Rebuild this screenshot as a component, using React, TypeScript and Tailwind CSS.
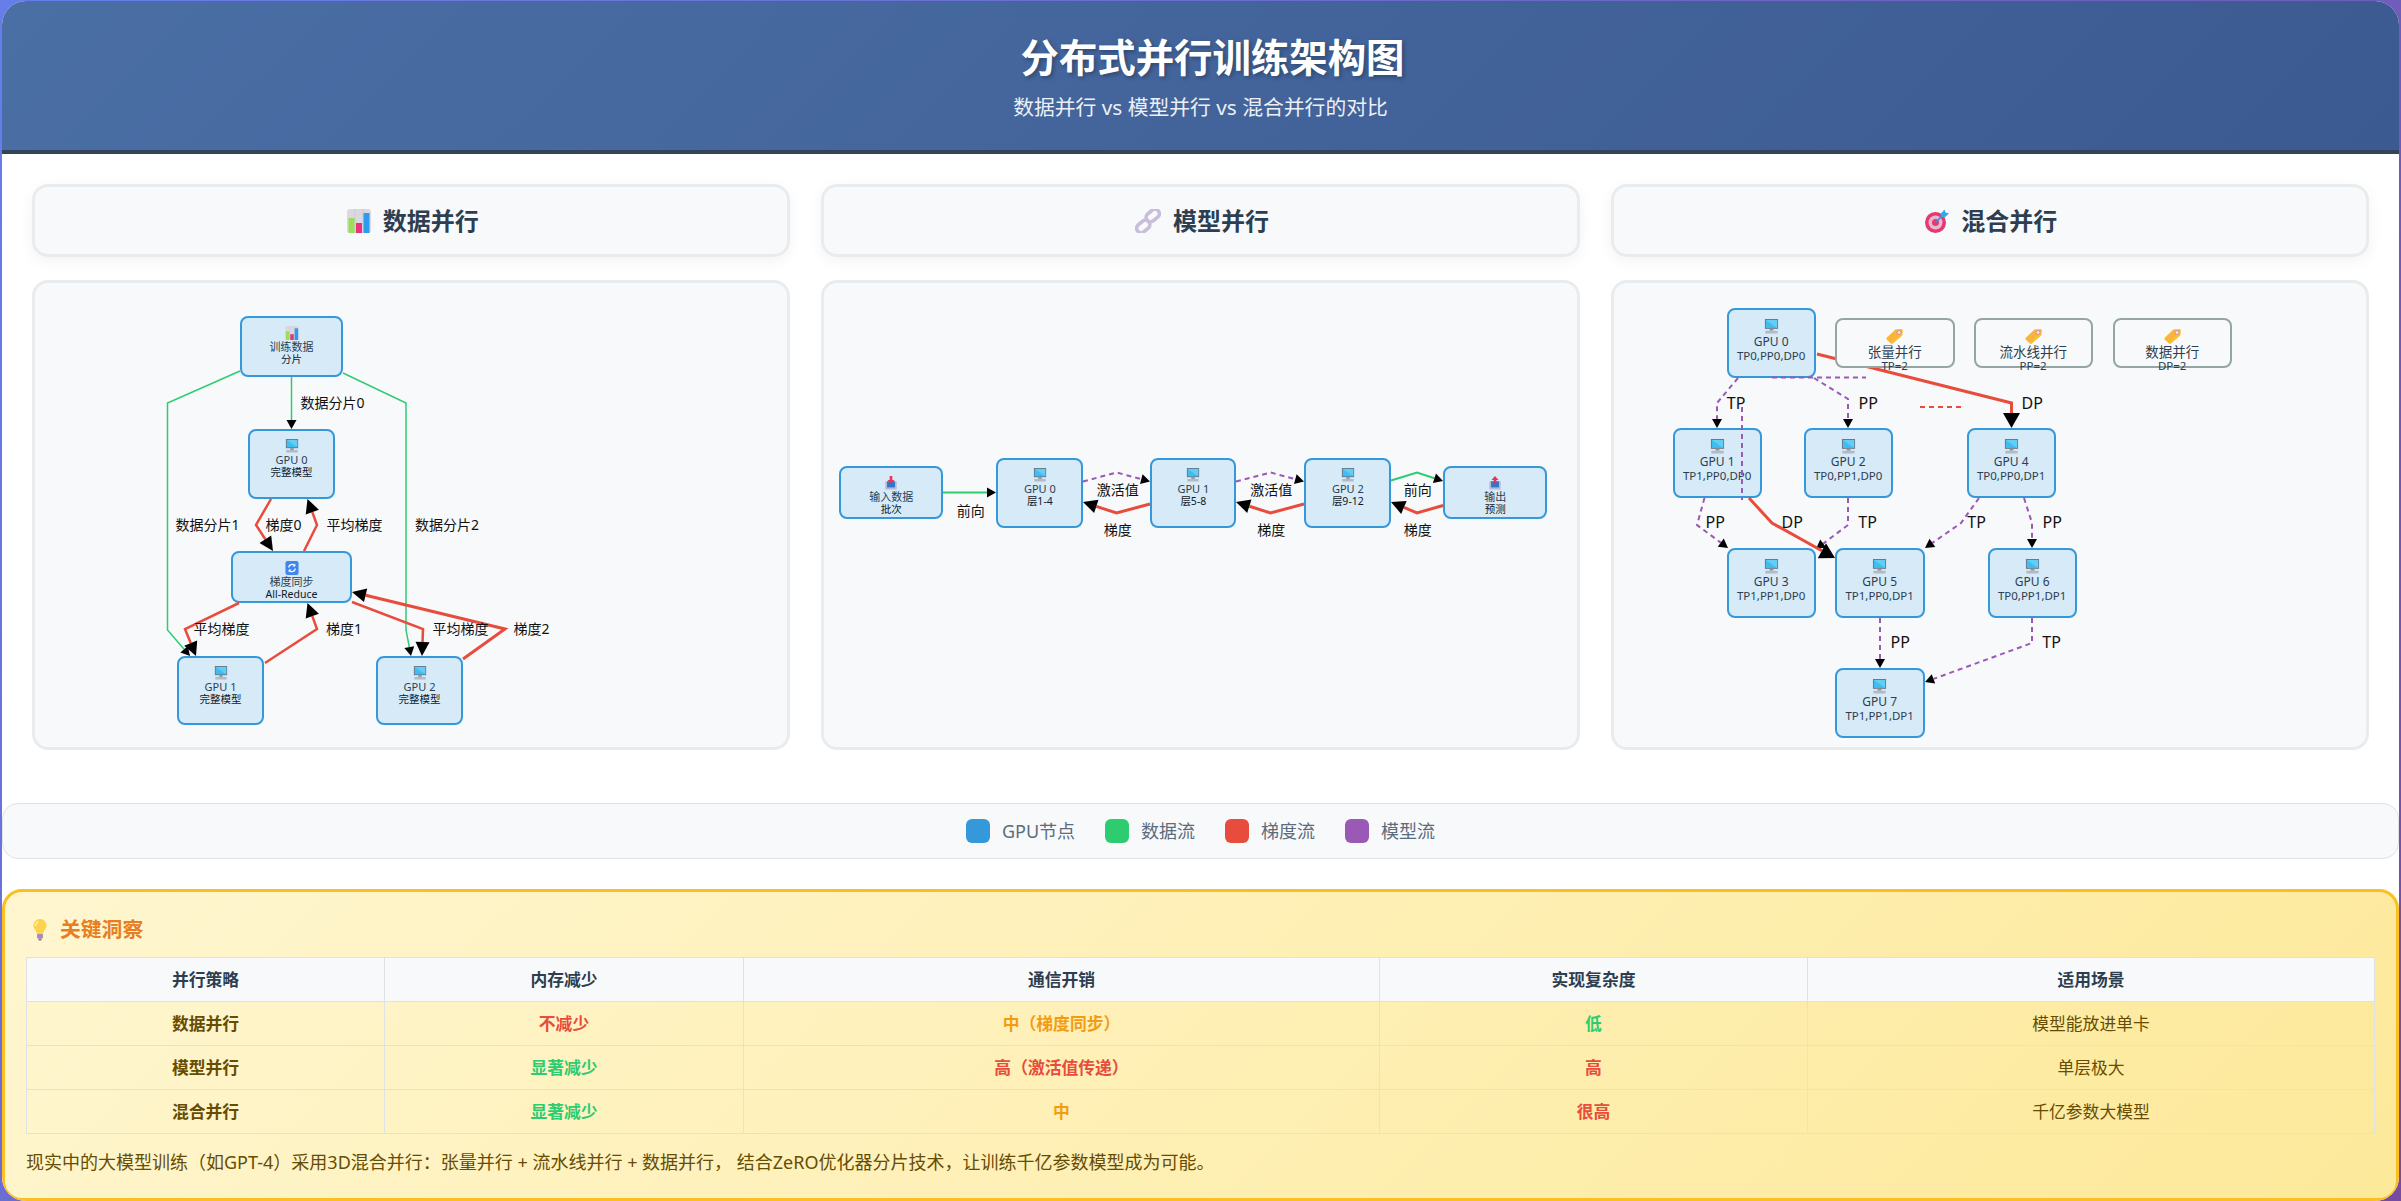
import type { ReactNode } from 'react'

type Pt = [number, number]
type Edge = { p: Pt[]; c: string; w: number; a?: [number, number]; d?: string }
type NodeBox = { box: [number, number, number, number]; icon: ReactNode; lines: [string, string]; plain?: boolean }
type Label = { x: number; y: number; t: string }

const GREEN = '#2ecc71'
const RED = '#e74c3c'
const PURPLE = '#9b59b6'
const SMALL: [number, number] = [9, 5]
const MID: [number, number] = [14, 7]
const BIG: [number, number] = [15, 8.5]

function BarIcon({ size }: { size: number }) {
  return (
    <svg width={size} height={size} viewBox="0 0 24 24">
      <rect x="0" y="0" width="24" height="24" rx="3" fill="#dcd8e0" />
      <path d="M8 0v24M16 0v24" stroke="#c8c4cc" strokeWidth="0.7" />
      <rect x="1.5" y="9" width="6" height="15" fill="#9ade5a" />
      <rect x="9" y="14" width="6" height="10" fill="#e9337c" />
      <rect x="16.5" y="4" width="6" height="20" fill="#2d9cef" />
    </svg>
  )
}

function LinkIcon() {
  return (
    <svg width={26} height={24} viewBox="0 0 24 24" fill="none" stroke="#c8bedb" strokeWidth="3.6">
      <rect x="9.5" y="2" width="14.5" height="9" rx="4.5" transform="rotate(-40 16.75 6.5)" />
      <rect x="0" y="13" width="14.5" height="9" rx="4.5" transform="rotate(-40 7.25 17.5)" />
    </svg>
  )
}

function TargetIcon() {
  return (
    <svg width={24} height={24} viewBox="0 0 24 24">
      <circle cx="10.5" cy="13.5" r="10.5" fill="#e8396f" />
      <circle cx="10.5" cy="13.5" r="7" fill="#e6b8d8" />
      <circle cx="10.5" cy="13.5" r="3.5" fill="#e8396f" />
      <path d="M10.5 13.5L19 5" stroke="#3a8fd8" strokeWidth="1.6" />
      <path d="M15.5 5L19.5 0.5L20.5 3.5L24 4.5L19.5 8.5L16 8Z" fill="#35a5ec" />
    </svg>
  )
}

function BulbIcon() {
  return (
    <svg width={14} height={22} viewBox="0 0 14 22">
      <path d="M7 0C3 0 0.5 3 0.5 6.5C0.5 10 3.5 11.5 4 15H10C10.5 11.5 13.5 10 13.5 6.5C13.5 3 11 0 7 0Z" fill="#fcd34d" />
      <path d="M5 2.5C3.5 3.5 2.5 5 2.7 7" stroke="#fff6c8" strokeWidth="1.2" fill="none" />
      <rect x="4" y="15" width="6" height="4.5" rx="1" fill="#a78bba" />
      <rect x="5.3" y="19.5" width="3.4" height="2" rx="1" fill="#8a6fa0" />
    </svg>
  )
}

function MonitorIcon({ size = 14 }: { size?: number }) {
  return (
    <svg width={size} height={size} viewBox="0 0 16 16">
      <rect x="1" y="0" width="14" height="10.5" fill="#6c7684" />
      <rect x="2" y="1" width="12" height="8.5" fill="#3fbdf0" />
      <path d="M2 1H14V9.5Z" fill="#62cdf5" />
      <rect x="6" y="10.5" width="4" height="2" fill="#8d95a3" />
      <rect x="1.5" y="12.5" width="13" height="3" rx="0.6" fill="#b4b9c4" />
    </svg>
  )
}

function TagIcon() {
  return (
    <svg width={17} height={15} viewBox="0 0 17 15">
      <path d="M9.5 0.5L15.5 0.3C16.3 0.3 16.8 0.8 16.8 1.6L16.3 6.5L7 14.6C6.4 15.1 5.6 15 5 14.5L0.8 10.4C0.2 9.8 0.2 9 0.8 8.4Z" fill="#fbbf3a" />
      <path d="M9.5 0.5L15.5 0.3L16.8 1.6L5 14.5L0.8 10.4Z" fill="#f7a93b" opacity="0.5" />
      <circle cx="13" cy="3.6" r="2" fill="#f6e7d8" stroke="#d98aa0" strokeWidth="1" />
    </svg>
  )
}

function SyncIcon() {
  return (
    <svg width={14} height={14} viewBox="0 0 16 16">
      <rect x="0.5" y="0" width="15" height="16" rx="2.5" fill="#3f86ee" />
      <path d="M4.2 7.5A4 4 0 0 1 11 5M11.8 8.5A4 4 0 0 1 5 11" stroke="#fff" strokeWidth="1.5" fill="none" />
      <path d="M11.8 2.8V6.2H8.6ZM4.2 13.2V9.8H7.4Z" fill="#fff" />
    </svg>
  )
}

function TrayIcon({ up }: { up?: boolean }) {
  return (
    <svg width={14} height={14} viewBox="0 0 16 16">
      <rect x="1.5" y="6" width="13" height="9.5" rx="1" fill="#b7b9d8" />
      <rect x="3.5" y="6" width="9" height="7" fill="#2f78c8" />
      <path
        d={up ? 'M8 0L12 4.5H9.5V8.5H6.5V4.5H4Z' : 'M6.5 0H9.5V4.5H12L8 8.5L4 4.5H6.5Z'}
        fill="#e8335a"
      />
    </svg>
  )
}

function EdgeLine({ edge }: { edge: Edge }) {
  const pts = edge.p
  const last = pts[pts.length - 1]
  const prev = pts[pts.length - 2]
  const dx = last[0] - prev[0]
  const dy = last[1] - prev[1]
  const len = Math.hypot(dx, dy) || 1
  const ux = dx / len
  const uy = dy / len
  const [al, ah] = edge.a ?? [0, 0]
  const bx = last[0] - ux * al
  const by = last[1] - uy * al
  const line = [...pts.slice(0, -1), [bx, by] as Pt].map((q) => q.join(',')).join(' ')
  return (
    <g>
      <polyline points={line} fill="none" stroke={edge.c} strokeWidth={edge.w} strokeDasharray={edge.d} />
      {edge.a && (
        <polygon
          points={`${last[0]},${last[1]} ${bx - uy * ah},${by + ux * ah} ${bx + uy * ah},${by - ux * ah}`}
          fill="#000"
        />
      )}
    </g>
  )
}

function Edges({ edges, ox, oy }: { edges: Edge[]; ox: number; oy: number }) {
  return (
    <svg className="pointer-events-none absolute inset-0 h-full w-full overflow-visible">
      <g transform={`translate(${-ox} ${-oy})`}>
        {edges.map((e, i) => (
          <EdgeLine key={i} edge={e} />
        ))}
      </g>
    </svg>
  )
}

function DiagramNode({ node, ox, oy, large }: { node: NodeBox; ox: number; oy: number; large?: boolean }) {
  const [x0, y0, x1, y1] = node.box
  const tone = node.plain ? 'border-[#95a5a6] bg-[#f8f9fa]' : 'border-[#3498db] bg-[#d6eaf8]'
  return (
    <div
      className={`absolute flex flex-col items-center rounded-[8px] border-2 text-center text-[#2c3e50] [&>*]:shrink-0 ${tone} ${
        large ? 'pt-[9px]' : 'pt-[8px]'
      }`}
      style={{ left: x0 - ox, top: y0 - oy, width: x1 - x0, height: y1 - y0 }}
    >
      {node.icon}
      {large ? (
        <>
          <div className={`mt-[1px] whitespace-nowrap leading-[14px] ${node.plain ? 'text-[13.5px]' : 'text-[12px]'}`}>
            {node.lines[0]}
          </div>
          <div className="whitespace-nowrap text-[11.5px] leading-[13px]">{node.lines[1]}</div>
        </>
      ) : (
        <>
          <div className="mt-[1px] whitespace-nowrap text-[11px] leading-[12px]">{node.lines[0]}</div>
          <div className="whitespace-nowrap text-[10.5px] leading-[12px] text-[#111827]">{node.lines[1]}</div>
        </>
      )}
    </div>
  )
}

function Diagram({
  x,
  nodes,
  edges,
  under = [],
  labels,
  large,
}: {
  x: number
  nodes: NodeBox[]
  edges: Edge[]
  under?: Edge[]
  labels: Label[]
  large?: boolean
}) {
  const ox = x + 3
  const oy = 283
  return (
    <div className="mt-[23px] h-[470px] rounded-[16px] border-[3px] border-[#e9ecef] bg-[#f8f9fa]">
      <div className="relative h-full w-full">
        <Edges edges={under} ox={ox} oy={oy} />
        {nodes.map((n, i) => (
          <DiagramNode key={i} node={n} ox={ox} oy={oy} large={large} />
        ))}
        <Edges edges={edges} ox={ox} oy={oy} />
        {labels.map((l, i) => (
          <span
            key={i}
            className={`absolute -translate-x-1/2 -translate-y-1/2 whitespace-nowrap leading-[18px] text-[#111] ${
              large ? 'text-[16px]' : 'text-[14px]'
            }`}
            style={{ left: l.x - ox, top: l.y - oy }}
          >
            {l.t}
          </span>
        ))}
      </div>
    </div>
  )
}

const dataNodes: NodeBox[] = [
  { box: [240, 316, 343, 377], icon: <BarIcon size={14} />, lines: ['训练数据', '分片'] },
  { box: [248, 429, 335, 499], icon: <MonitorIcon />, lines: ['GPU 0', '完整模型'] },
  { box: [231, 551, 352, 603], icon: <SyncIcon />, lines: ['梯度同步', 'All-Reduce'] },
  { box: [177, 656, 264, 725], icon: <MonitorIcon />, lines: ['GPU 1', '完整模型'] },
  { box: [376, 656, 463, 725], icon: <MonitorIcon />, lines: ['GPU 2', '完整模型'] },
]

const dataEdges: Edge[] = [
  { p: [[291.5, 377], [291.5, 429]], c: GREEN, w: 1.5, a: SMALL },
  { p: [[240, 371], [167.5, 403], [167.5, 630], [190, 656]], c: GREEN, w: 1.5, a: SMALL },
  { p: [[343, 373], [406, 403], [406, 630], [411, 656]], c: GREEN, w: 1.5, a: SMALL },
  { p: [[271, 499], [256, 525], [273, 551]], c: RED, w: 2.5, a: MID },
  { p: [[304, 551], [317, 525], [307.5, 499]], c: RED, w: 2.5, a: MID },
  { p: [[239, 603], [185, 629], [196, 656]], c: RED, w: 2.5, a: MID },
  { p: [[265, 663], [317, 629], [307.5, 603]], c: RED, w: 2.5, a: MID },
  { p: [[352, 602], [423, 629], [422, 656]], c: RED, w: 2.5, a: MID },
  { p: [[463, 659], [505, 629], [352, 592]], c: RED, w: 3, a: MID },
]

const dataLabels: Label[] = [
  { x: 332.5, y: 403, t: '数据分片0' },
  { x: 207.5, y: 525, t: '数据分片1' },
  { x: 283.5, y: 525, t: '梯度0' },
  { x: 354.5, y: 525, t: '平均梯度' },
  { x: 447, y: 525, t: '数据分片2' },
  { x: 221.5, y: 629, t: '平均梯度' },
  { x: 344, y: 629, t: '梯度1' },
  { x: 460.5, y: 629, t: '平均梯度' },
  { x: 531.5, y: 629, t: '梯度2' },
]

const modelNodes: NodeBox[] = [
  { box: [839, 466, 943, 519], icon: <TrayIcon />, lines: ['输入数据', '批次'] },
  { box: [996, 458, 1083, 528], icon: <MonitorIcon />, lines: ['GPU 0', '层1-4'] },
  { box: [1150, 458, 1236, 528], icon: <MonitorIcon />, lines: ['GPU 1', '层5-8'] },
  { box: [1304, 458, 1391, 528], icon: <MonitorIcon />, lines: ['GPU 2', '层9-12'] },
  { box: [1443, 466, 1547, 519], icon: <TrayIcon up />, lines: ['输出', '预测'] },
]

const DASH = '5 4'

const modelEdges: Edge[] = [
  { p: [[943, 492.5], [996, 492.5]], c: GREEN, w: 2, a: SMALL },
  { p: [[1083, 481.5], [1116.5, 472.5], [1150, 481.5]], c: PURPLE, w: 2, a: SMALL, d: DASH },
  { p: [[1236, 481.5], [1270.5, 472.5], [1304, 481.5]], c: PURPLE, w: 2, a: SMALL, d: DASH },
  { p: [[1391, 480.5], [1417, 472.5], [1443, 481]], c: GREEN, w: 2, a: SMALL },
  { p: [[1150, 504], [1116.5, 513], [1083, 502]], c: RED, w: 3, a: MID },
  { p: [[1304, 504], [1270.5, 513], [1236, 502]], c: RED, w: 3, a: MID },
  { p: [[1443, 505.5], [1417, 513], [1391, 502]], c: RED, w: 3, a: MID },
]

const modelLabels: Label[] = [
  { x: 970.5, y: 511, t: '前向' },
  { x: 1117.5, y: 490, t: '激活值' },
  { x: 1271, y: 490, t: '激活值' },
  { x: 1417.5, y: 490, t: '前向' },
  { x: 1117.5, y: 530, t: '梯度' },
  { x: 1271, y: 530, t: '梯度' },
  { x: 1417.5, y: 530, t: '梯度' },
]

const hybridNodes: NodeBox[] = [
  { box: [1727, 308, 1816, 378], icon: <MonitorIcon size={15} />, lines: ['GPU 0', 'TP0,PP0,DP0'] },
  { box: [1835, 318, 1955, 368], icon: <TagIcon />, lines: ['张量并行', 'TP=2'], plain: true },
  { box: [1974, 318, 2093, 368], icon: <TagIcon />, lines: ['流水线并行', 'PP=2'], plain: true },
  { box: [2113, 318, 2232, 368], icon: <TagIcon />, lines: ['数据并行', 'DP=2'], plain: true },
  { box: [1673, 428, 1762, 498], icon: <MonitorIcon size={15} />, lines: ['GPU 1', 'TP1,PP0,DP0'] },
  { box: [1804, 428, 1893, 498], icon: <MonitorIcon size={15} />, lines: ['GPU 2', 'TP0,PP1,DP0'] },
  { box: [1967, 428, 2056, 498], icon: <MonitorIcon size={15} />, lines: ['GPU 4', 'TP0,PP0,DP1'] },
  { box: [1727, 548, 1816, 618], icon: <MonitorIcon size={15} />, lines: ['GPU 3', 'TP1,PP1,DP0'] },
  { box: [1835, 548, 1925, 618], icon: <MonitorIcon size={15} />, lines: ['GPU 5', 'TP1,PP0,DP1'] },
  { box: [1988, 548, 2077, 618], icon: <MonitorIcon size={15} />, lines: ['GPU 6', 'TP0,PP1,DP1'] },
  { box: [1835, 668, 1925, 738], icon: <MonitorIcon size={15} />, lines: ['GPU 7', 'TP1,PP1,DP1'] },
]

const hybridUnder: Edge[] = [{ p: [[1817, 354], [2011.5, 403], [2011.5, 428]], c: RED, w: 3, a: BIG }]

const hybridEdges: Edge[] = [
  { p: [[1738, 378], [1717, 403], [1717, 428]], c: PURPLE, w: 2, a: SMALL, d: DASH },
  { p: [[1814, 378], [1848, 399], [1848, 428]], c: PURPLE, w: 2, a: SMALL, d: DASH },
  { p: [[1772, 377.5], [1866, 377.5]], c: PURPLE, w: 2, d: DASH },
  { p: [[1742, 407], [1742, 500]], c: PURPLE, w: 2, d: DASH },
  { p: [[1920, 407], [1965, 407]], c: RED, w: 2, d: '5 4' },
  { p: [[1704.5, 498], [1697, 525], [1728, 548]], c: PURPLE, w: 2, a: SMALL, d: DASH },
  { p: [[1848, 498], [1848, 525], [1816, 549]], c: PURPLE, w: 2, a: SMALL, d: DASH },
  { p: [[1749, 498], [1772, 523], [1835, 558]], c: RED, w: 3, a: BIG },
  { p: [[1979, 498], [1961, 523], [1925, 548]], c: PURPLE, w: 2, a: SMALL, d: DASH },
  { p: [[2024, 498], [2032, 523], [2032, 548]], c: PURPLE, w: 2, a: SMALL, d: DASH },
  { p: [[1880, 618], [1880, 668]], c: PURPLE, w: 2, a: SMALL, d: DASH },
  { p: [[2032, 618], [2032, 643], [1925, 682]], c: PURPLE, w: 2, a: SMALL, d: DASH },
]

const hybridLabels: Label[] = [
  { x: 1736.5, y: 403, t: 'TP' },
  { x: 1868.5, y: 403, t: 'PP' },
  { x: 2032.5, y: 403, t: 'DP' },
  { x: 1715.5, y: 522, t: 'PP' },
  { x: 1792.5, y: 522, t: 'DP' },
  { x: 1868, y: 522, t: 'TP' },
  { x: 1977, y: 522, t: 'TP' },
  { x: 2052.5, y: 522, t: 'PP' },
  { x: 1900.5, y: 642, t: 'PP' },
  { x: 2052, y: 642, t: 'TP' },
]

const rows = [
  { name: '数据并行', mem: ['不减少', 'text-[#e74c3c]'], comm: ['中（梯度同步）', 'text-[#f39c12]'], cx: ['低', 'text-[#2ecc71]'], use: '模型能放进单卡' },
  { name: '模型并行', mem: ['显著减少', 'text-[#2ecc71]'], comm: ['高（激活值传递）', 'text-[#e74c3c]'], cx: ['高', 'text-[#e74c3c]'], use: '单层极大' },
  { name: '混合并行', mem: ['显著减少', 'text-[#2ecc71]'], comm: ['中', 'text-[#f39c12]'], cx: ['很高', 'text-[#e74c3c]'], use: '千亿参数大模型' },
]

function PanelTitle({ icon, children }: { icon: ReactNode; children: ReactNode }) {
  return (
    <div className="flex h-[73px] items-center justify-center gap-[12px] rounded-[16px] border-[3px] border-[#e9ecef] bg-[#f8f9fa] pl-[3px] shadow-[0_4px_15px_rgba(0,0,0,0.05)]">
      {icon}
      <h2 className="text-[24px] font-bold text-[#2c3e50]">{children}</h2>
    </div>
  )
}

function LegendItem({ color, children }: { color: string; children: ReactNode }) {
  return (
    <div className="flex items-center gap-[12px]">
      <span className={`h-[24px] w-[24px] rounded-[6px] ${color}`} />
      <span className="text-[18px] text-[#5a6c7d]">{children}</span>
    </div>
  )
}

export default function App() {
  return (
    <div className="h-[1201px] overflow-hidden bg-[linear-gradient(135deg,#667eea_0%,#764ba2_100%)] pl-[2px] pr-[2px] pt-[1px] [font-family:'Noto_Sans','Noto_Sans_CJK_SC',sans-serif]">
      <div className="h-[1200px] overflow-hidden rounded-[24px] bg-white">
        <header className="flex h-[153px] flex-col items-center border-b-4 border-[#34425a] bg-[linear-gradient(135deg,#4a6fa5_0%,#3c5a92_100%)] text-white">
          <h1 className="ml-[24px] mt-[30px] text-[38.4px] font-bold leading-[52px] [text-shadow:2px_2px_4px_rgba(0,0,0,0.3)]">
            分布式并行训练架构图
          </h1>
          <p className="mt-[10px] text-[20.8px] leading-[28px] opacity-90">数据并行 vs 模型并行 vs 混合并行的对比</p>
        </header>

        <div className="grid grid-cols-3 gap-x-[31px] px-[30px] pt-[30px]">
          <div>
            <PanelTitle icon={<BarIcon size={24} />}>数据并行</PanelTitle>
            <Diagram x={32} nodes={dataNodes} edges={dataEdges} labels={dataLabels} />
          </div>
          <div>
            <PanelTitle icon={<LinkIcon />}>模型并行</PanelTitle>
            <Diagram x={821} nodes={modelNodes} edges={modelEdges} labels={modelLabels} />
          </div>
          <div>
            <PanelTitle icon={<TargetIcon />}>混合并行</PanelTitle>
            <Diagram
              x={1611}
              nodes={hybridNodes}
              edges={hybridEdges}
              under={hybridUnder}
              labels={hybridLabels}
              large
            />
          </div>
        </div>

        <div className="mt-[53px] flex h-[56px] items-center justify-center gap-[30px] rounded-[16px] border border-[#dee2e6] bg-[#f8f9fa]">
          <LegendItem color="bg-[#3498db]">GPU节点</LegendItem>
          <LegendItem color="bg-[#2ecc71]">数据流</LegendItem>
          <LegendItem color="bg-[#e74c3c]">梯度流</LegendItem>
          <LegendItem color="bg-[#9b59b6]">模型流</LegendItem>
        </div>

        <section className="mt-[30px] h-[312px] rounded-[20px] border-[3px] border-[#fbbf24] bg-[linear-gradient(135deg,#fff6d0_0%,#fde99a_100%)] px-[21px] pt-[23px]">
          <h3 className="flex h-[30px] items-center gap-[13px] pl-[7px] text-[20.8px] font-bold text-[#e67e22]">
            <BulbIcon />
            关键洞察
          </h3>
          <table className="mt-[12px] w-full table-fixed border-collapse text-center text-[16.8px]">
            <colgroup>
              <col className="w-[358px]" />
              <col className="w-[359px]" />
              <col className="w-[636px]" />
              <col className="w-[428px]" />
              <col className="w-[567px]" />
            </colgroup>
            <thead>
              <tr className="h-[44px] bg-[#f8f9fa] text-[#2c3e50]">
                {['并行策略', '内存减少', '通信开销', '实现复杂度', '适用场景'].map((h) => (
                  <th key={h} className="border border-[#dee2e6] font-bold">
                    {h}
                  </th>
                ))}
              </tr>
            </thead>
            <tbody className="text-[#664d03]">
              {rows.map((r) => (
                <tr key={r.name} className="h-[44px]">
                  <td className="border border-[#dee2e6] font-bold">{r.name}</td>
                  <td className={`border border-[#dee2e6] font-bold ${r.mem[1]}`}>{r.mem[0]}</td>
                  <td className={`border border-[#dee2e6] font-bold ${r.comm[1]}`}>{r.comm[0]}</td>
                  <td className={`border border-[#dee2e6] font-bold ${r.cx[1]}`}>{r.cx[0]}</td>
                  <td className="border border-[#dee2e6]">{r.use}</td>
                </tr>
              ))}
            </tbody>
          </table>
          <p className="mt-[16px] text-[18px] leading-[24px] text-[#664d03]">
            现实中的大模型训练（如GPT-4）采用3D混合并行：张量并行 + 流水线并行 + 数据并行， 结合ZeRO优化器分片技术，让训练千亿参数模型成为可能。
          </p>
        </section>
      </div>
    </div>
  )
}
